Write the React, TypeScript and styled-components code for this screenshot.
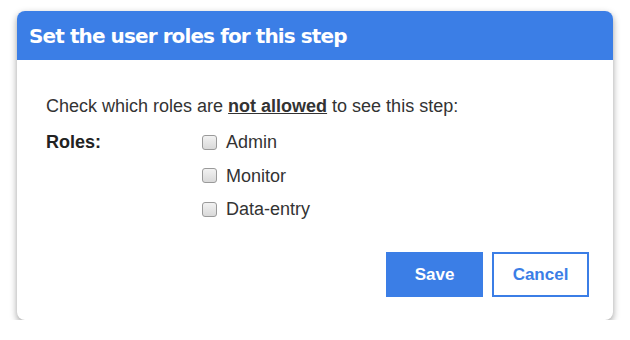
import React from "react";
import styled, { createGlobalStyle } from "styled-components";

const Global = createGlobalStyle`
  html, body { margin: 0; padding: 0; background: #ffffff; }
  body { font-family: "Liberation Sans", Arial, sans-serif; }
`;

const Page = styled.div`
  padding: 11px 17px 0 17px;
  width: 630px;
  box-sizing: border-box;
`;

const Dialog = styled.div`
  width: 596px;
  height: 309px;
  border-radius: 8px;
  background: #fff;
  box-shadow: 0 3px 7px rgba(0, 0, 0, 0.38);
  overflow: hidden;
  display: flex;
  flex-direction: column;
`;

const Header = styled.div`
  background: #3b7ee6;
  height: 49px;
  display: flex;
  align-items: center;
  padding-left: 12px;
  color: #fff;
  font-family: "DejaVu Sans", Verdana, sans-serif;
  font-weight: bold;
  font-size: 20px;
  letter-spacing: -0.9px;
`;

const Body = styled.div`
  padding: 35px 29px 0 29px;
  color: #222;
  font-size: 18px;
  flex: 1;
  display: flex;
  flex-direction: column;
`;

const Intro = styled.p`
  margin: 0;
  line-height: 22px;
  color: #333;
`;

const Strong = styled.span`
  font-weight: bold;
  text-decoration: underline;
`;

const RolesRow = styled.div`
  display: flex;
  margin-top: 14px;
`;

const Label = styled.div`
  width: 156px;
  font-weight: bold;
  line-height: 22px;
`;

const List = styled.div`
  display: flex;
  flex-direction: column;
  gap: 11.5px;
`;

const Option = styled.label`
  display: flex;
  align-items: center;
  line-height: 22px;
  color: #333;
`;

const Box = styled.span`
  width: 15px;
  height: 15px;
  box-sizing: border-box;
  border: 1px solid #9a9a9a;
  border-radius: 3px;
  background: linear-gradient(#f2f2f2, #d9d9d9);
  margin-right: 9px;
`;

const Actions = styled.div`
  display: flex;
  justify-content: flex-end;
  gap: 9px;
  margin-top: 32px;
  margin-right: -5px;
`;

const Button = styled.button<{ $primary?: boolean }>`
  width: 97px;
  height: 45px;
  box-sizing: border-box;
  font-family: "Liberation Sans", Arial, sans-serif;
  font-weight: bold;
  font-size: 17px;
  border: 2px solid #3b7ee6;
  background: ${(p) => (p.$primary ? "#3b7ee6" : "#fff")};
  color: ${(p) => (p.$primary ? "#fff" : "#3b7ee6")};
  padding: 0;
`;

export default function App() {
  return (
    <>
      <Global />
      <Page>
        <Dialog>
          <Header>Set the user roles for this step</Header>
          <Body>
            <Intro>
              Check which roles are <Strong>not allowed</Strong> to see this step:
            </Intro>
            <RolesRow>
              <Label>Roles:</Label>
              <List>
                {["Admin", "Monitor", "Data-entry"].map((r) => (
                  <Option key={r}>
                    <Box />
                    {r}
                  </Option>
                ))}
              </List>
            </RolesRow>
            <Actions>
              <Button $primary>Save</Button>
              <Button>Cancel</Button>
            </Actions>
          </Body>
        </Dialog>
      </Page>
    </>
  );
}
